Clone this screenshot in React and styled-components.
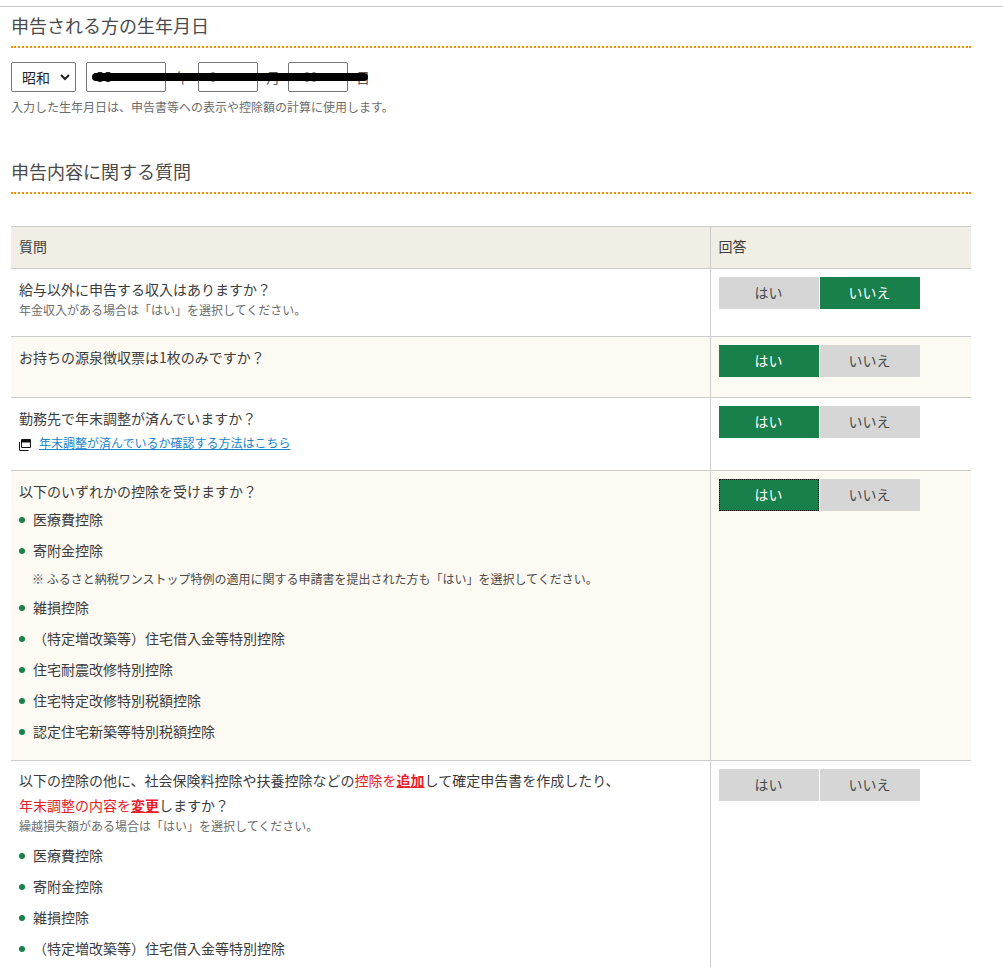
import styled, { createGlobalStyle } from "styled-components"

const Global = createGlobalStyle`
  html, body { margin: 0; padding: 0; background: #fff; overflow: hidden; }
  body {
    font-family: "Noto Sans CJK JP", "Noto Sans", sans-serif;
    font-size: 14px;
    color: #3c3c3c;
  }
`
const Page = styled.div`
  width: 1003px;
  height: 967px;
  overflow: hidden;
  box-sizing: border-box;
  padding: 6px 32px 0 11px;
  position: relative;
  &::before {
    content: "";
    position: absolute;
    left: 0;
    right: 0;
    top: 6px;
    height: 1px;
    background: #ccc;
  }
`
const Heading = styled.h2`
  margin: 0;
  height: 42px;
  box-sizing: border-box;
  padding-top: 7px;
  font-size: 18px;
  line-height: 24px;
  font-weight: 400;
  color: #4a4a4a;
  border-bottom: 2px dotted #e8900c;
`
const DateRow = styled.div`
  position: relative;
  display: flex;
  align-items: center;
  margin-top: 14px;
  height: 30px;
`
const Select = styled.div`
  width: 65px;
  height: 30px;
  box-sizing: border-box;
  border: 1px solid #767676;
  border-radius: 2px;
  display: flex;
  align-items: center;
  justify-content: space-between;
  padding: 0 4px 1px 10px;
  color: #222;
  margin-right: 10px;
`
const Field = styled.div`
  width: ${props => props.$w}px;
  height: 30px;
  box-sizing: border-box;
  border: 1px solid #767676;
  border-radius: 2px;
`
const Unit = styled.span`
  width: ${props => props.$w}px;
  text-align: center;
  color: #555;
`
const Scribble = styled.svg`
  position: absolute;
  left: 0;
  top: 0;
  pointer-events: none;
`
const Hint = styled.p`
  margin: 6px 0 0;
  font-size: 12px;
  line-height: 18px;
  color: #6c6c6c;
`
const SecondHeading = styled(Heading)`
  margin-top: 36px;
`
const Table = styled.table`
  width: 960px;
  margin-top: 32px;
  border-collapse: collapse;
  table-layout: fixed;
`
const Th = styled.th`
  height: 42px;
  box-sizing: border-box;
  padding: 0 8px 3px;
  background: #f1efe5;
  border-top: 1px solid #ccc;
  border-bottom: 1px solid #ccc;
  text-align: left;
  font-size: 14px;
  font-weight: 400;
  color: #3c3c3c;
  & + & { border-left: 1px solid #ccc; }
`
const Tr = styled.tr`
  background: ${props => props.$tint ? "#fdfaf3" : "#fff"};
`
const Question = styled.td`
  height: ${props => props.$h}px;
  box-sizing: border-box;
  padding: ${props => props.$top || 8}px 8px 0;
  vertical-align: top;
  border-bottom: 1px solid #ccc;
  line-height: 24px;
`
const Answer = styled.td`
  box-sizing: border-box;
  padding: 8px 8px 0;
  vertical-align: top;
  border-left: 1px solid #ccc;
  border-bottom: 1px solid #ccc;
`
const Toggle = styled.div`
  display: flex;
  gap: 1px;
`
const Choice = styled.button`
  width: 100px;
  height: 32px;
  padding: 0 0 2px;
  border: 0;
  font: inherit;
  color: ${props => props.$on ? "#fff" : "#4a4a4a"};
  background: ${props => props.$on ? "#19804c" : "#d6d6d6"};
  outline: ${props => props.$focus ? "1px dotted #111" : "none"};
  outline-offset: -1px;
`
const Note = styled.div`
  font-size: 12px;
  line-height: 18px;
  color: #6c6c6c;
`
const TightNote = styled(Note)`
  margin-top: -1px;
`
const LinkRow = styled.div`
  display: flex;
  align-items: center;
  gap: 8px;
  margin-top: 3px;
  font-size: 12px;
  line-height: 20px;
`
const WindowIcon = styled.svg`
  margin-top: 3px;
  flex: none;
`
const DocLink = styled.a`
  color: #1a83c9;
  text-decoration: underline;
`
const Bullets = styled.ul`
  list-style: none;
  margin: ${props => props.$top}px 0 0;
  padding: 0;
`
const Bullet = styled.li`
  position: relative;
  padding-left: 14px;
  height: 31px;
  line-height: 31px;
  &::before {
    content: "";
    position: absolute;
    left: 0;
    top: 13px;
    width: 6px;
    height: 6px;
    border-radius: 50%;
    background: #19804c;
  }
`
const SubNote = styled.div`
  font-size: 12px;
  line-height: 26px;
  padding-left: 13px;
  color: #4a4a4a;
`
const Red = styled.span`
  color: #e8202a;
`
const RedStrong = styled.strong`
  color: #e8202a;
  text-decoration: underline;
`
const QuestionLine = styled.div`
  line-height: 25px;
`

function YesNo({ value, focus }) {
  return (
    <Toggle>
      <Choice $on={value === "yes"} $focus={focus}>はい</Choice>
      <Choice $on={value === "no"}>いいえ</Choice>
    </Toggle>
  )
}

function App() {
  return (
    <Page>
      <Global />
      <Heading>申告される方の生年月日</Heading>
      <DateRow>
        <Select>
          昭和
          <svg width="12" height="12" viewBox="0 0 12 12">
            <path d="M2 4l4 4 4-4" fill="none" stroke="#222" strokeWidth="2" />
          </svg>
        </Select>
        <Field $w={80} />
        <Unit $w={32}>年</Unit>
        <Field $w={60} />
        <Unit $w={30}>月</Unit>
        <Field $w={60} />
        <Unit $w={30}>日</Unit>
        <Scribble width="370" height="30" viewBox="0 0 370 30">
          <path d="M85 15H353" stroke="#000" strokeWidth="8" strokeLinecap="round" />
          <circle cx="89" cy="15" r="5" fill="#000" />
          <circle cx="97" cy="15" r="5" fill="#000" />
          <circle cx="202" cy="15" r="4.500" fill="#000" />
          <circle cx="296" cy="15" r="4.500" fill="#000" />
          <circle cx="303" cy="15" r="4.500" fill="#000" />
        </Scribble>
      </DateRow>
      <Hint>入力した生年月日は、申告書等への表示や控除額の計算に使用します。</Hint>

      <SecondHeading>申告内容に関する質問</SecondHeading>
      <Table>
        <colgroup>
          <col width="699" />
          <col width="261" />
        </colgroup>
        <thead>
          <tr>
            <Th>質問</Th>
            <Th>回答</Th>
          </tr>
        </thead>
        <tbody>
          <Tr>
            <Question $h={68}>
              給与以外に申告する収入はありますか？
              <Note>年金収入がある場合は「はい」を選択してください。</Note>
            </Question>
            <Answer><YesNo value="no" /></Answer>
          </Tr>
          <Tr $tint>
            <Question $h={61}>お持ちの源泉徴収票は1枚のみですか？</Question>
            <Answer><YesNo value="yes" /></Answer>
          </Tr>
          <Tr>
            <Question $h={73}>
              勤務先で年末調整が済んでいますか？
              <LinkRow>
                <WindowIcon width="12" height="12" viewBox="0 0 12 12">
                  <path d="M2.500.5h9v8h-9z" fill="none" stroke="#111" />
                  <path d="M2.500 1h9v2.500h-9z" fill="#111" />
                  <path d="M.5 3v8.500h9" fill="none" stroke="#111" />
                </WindowIcon>
                <DocLink>年末調整が済んでいるか確認する方法はこちら</DocLink>
              </LinkRow>
            </Question>
            <Answer><YesNo value="yes" /></Answer>
          </Tr>
          <Tr $tint>
            <Question $h={290}>
              以下のいずれかの控除を受けますか？
              <Bullets $top={1}>
                <Bullet>医療費控除</Bullet>
                <Bullet>寄附金控除</Bullet>
                <SubNote>※ ふるさと納税ワンストップ特例の適用に関する申請書を提出された方も「はい」を選択してください。</SubNote>
                <Bullet>雑損控除</Bullet>
                <Bullet>（特定増改築等）住宅借入金等特別控除</Bullet>
                <Bullet>住宅耐震改修特別控除</Bullet>
                <Bullet>住宅特定改修特別税額控除</Bullet>
                <Bullet>認定住宅新築等特別税額控除</Bullet>
              </Bullets>
            </Question>
            <Answer><YesNo value="yes" focus /></Answer>
          </Tr>
          <Tr>
            <Question $h={300} $top={7}>
              <QuestionLine>
                以下の控除の他に、社会保険料控除や扶養控除などの<Red>控除を</Red><RedStrong>追加</RedStrong>して確定申告書を作成したり、
              </QuestionLine>
              <QuestionLine>
                <Red>年末調整の内容を</Red><RedStrong>変更</RedStrong>しますか？
              </QuestionLine>
              <TightNote>繰越損失額がある場合は「はい」を選択してください。</TightNote>
              <Bullets $top={5}>
                <Bullet>医療費控除</Bullet>
                <Bullet>寄附金控除</Bullet>
                <Bullet>雑損控除</Bullet>
                <Bullet>（特定増改築等）住宅借入金等特別控除</Bullet>
              </Bullets>
            </Question>
            <Answer><YesNo /></Answer>
          </Tr>
        </tbody>
      </Table>
    </Page>
  )
}

export default App
